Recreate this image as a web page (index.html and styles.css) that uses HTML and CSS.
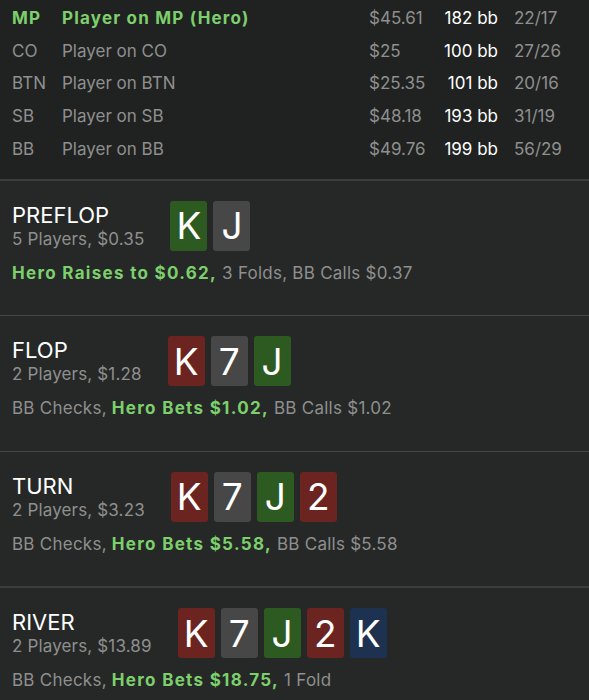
FILE: index.html
```html
<!DOCTYPE html>
<html>
<head>
<meta charset="utf-8">
<link rel="stylesheet" href="styles.css">
</head>
<body>
<div class="players">
  <div class="prow hero"><span class="pos">MP</span><span class="name">Player on MP (Hero)</span><span class="money">$45.61</span><span class="bb">182 bb</span><span class="ratio">22/17</span></div>
  <div class="prow"><span class="pos">CO</span><span class="name">Player on CO</span><span class="money">$25</span><span class="bb">100 bb</span><span class="ratio">27/26</span></div>
  <div class="prow"><span class="pos">BTN</span><span class="name">Player on BTN</span><span class="money">$25.35</span><span class="bb">101 bb</span><span class="ratio">20/16</span></div>
  <div class="prow"><span class="pos">SB</span><span class="name">Player on SB</span><span class="money">$48.18</span><span class="bb">193 bb</span><span class="ratio">31/19</span></div>
  <div class="prow"><span class="pos">BB</span><span class="name">Player on BB</span><span class="money">$49.76</span><span class="bb">199 bb</span><span class="ratio">56/29</span></div>
</div>

<section class="street sep-thick">
  <div class="head">
    <div class="info"><div class="title">PREFLOP</div><div class="sub">5 Players, $0.35</div></div>
    <div class="cards"><span class="card green">K</span><span class="card grey">J</span></div>
  </div>
  <div class="actions"><b>Hero Raises to $0.62,</b> 3 Folds, BB Calls $0.37</div>
</section>

<section class="street">
  <div class="head">
    <div class="info"><div class="title">FLOP</div><div class="sub">2 Players, $1.28</div></div>
    <div class="cards"><span class="card red">K</span><span class="card grey">7</span><span class="card green">J</span></div>
  </div>
  <div class="actions">BB Checks, <b>Hero Bets $1.02,</b> BB Calls $1.02</div>
</section>

<section class="street">
  <div class="head">
    <div class="info"><div class="title">TURN</div><div class="sub">2 Players, $3.23</div></div>
    <div class="cards"><span class="card red">K</span><span class="card grey">7</span><span class="card green">J</span><span class="card red">2</span></div>
  </div>
  <div class="actions">BB Checks, <b>Hero Bets $5.58,</b> BB Calls $5.58</div>
</section>

<section class="street sep-thick">
  <div class="head">
    <div class="info"><div class="title">RIVER</div><div class="sub">2 Players, $13.89</div></div>
    <div class="cards"><span class="card red">K</span><span class="card grey">7</span><span class="card green">J</span><span class="card red">2</span><span class="card blue">K</span></div>
  </div>
  <div class="actions">BB Checks, <b>Hero Bets $18.75,</b> 1 Fold</div>
</section>
</body>
</html>
```

FILE: styles.css
```css
html, body {
  margin: 0;
  padding: 0;
  background: #252826;
  font-family: Inter, "Noto Sans", sans-serif;
  color: #8f8f8f;
  overflow: hidden;
}

.players {
  background: #1f2220;
  padding: 1.5px 0 13.5px 12px;
}

.prow {
  display: flex;
  align-items: center;
  height: 32.75px;
  font-size: 17px;
  white-space: nowrap;
}

.pos { width: 50px; }
.name { width: 307px; }
.money { width: 64px; }
.bb { width: 65px; text-align: right; color: #ffffff; }
.ratio { margin-left: 16px; }

.hero .pos, .hero .name {
  color: #7dcf6d;
  font-weight: 700;
  letter-spacing: 1.2px;
}

.street {
  border-top: 1px solid #444745;
  padding: 20px 12px 31.5px;
}

.street.sep-thick { border-top: 2px solid #3a3d3b; }

.head {
  display: flex;
  align-items: center;
  gap: 26px;
}

.title {
  font-size: 22px;
  color: #ffffff;
  line-height: 26px;
}

.sub {
  margin-top: 1px;
  font-size: 17px;
  line-height: 21px;
  letter-spacing: 0.15px;
}

.cards {
  display: flex;
  gap: 6px;
}

.card {
  width: 37px;
  height: 50px;
  border-radius: 3px;
  color: #ffffff;
  font-size: 37px;
  display: flex;
  align-items: center;
  justify-content: center;
}

.green { background: #2c5a20; }
.grey { background: #474747; }
.red { background: #6c2420; }
.blue { background: #1c3250; }

.actions {
  margin-top: 12px;
  font-size: 17px;
  line-height: 21px;
  letter-spacing: 0.25px;
  white-space: nowrap;
}

.actions b {
  color: #7dcf6d;
  font-weight: 700;
  letter-spacing: 1.3px;
}
```
